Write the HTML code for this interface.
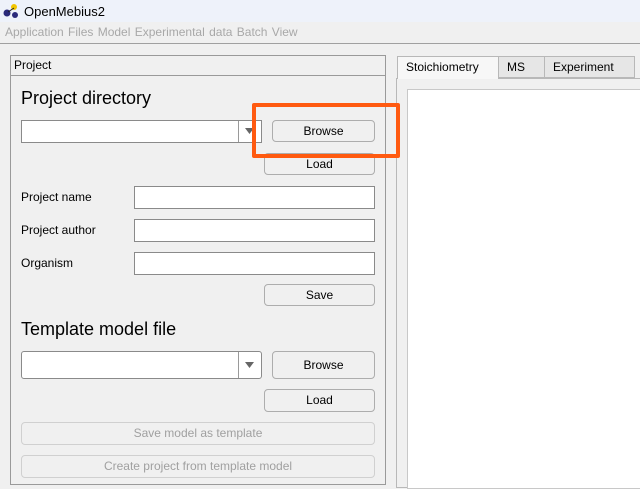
<!DOCTYPE html>
<html><head><style>
body{margin:0;width:640px;height:480px;overflow:hidden;background:#f0f0f0;font-family:"Liberation Sans",Arial,sans-serif;position:relative;font-size:12px;color:#000}
.a{position:absolute;box-sizing:border-box}
.btn{position:absolute;box-sizing:border-box;border:1px solid #adadad;border-radius:4px;background:#f0f0f0;text-align:center;font-size:12px;color:#000}
.dis{color:#a0a0a0;border-color:#d0d0d0}
.inp{position:absolute;box-sizing:border-box;border:1px solid #8a8a8a;background:#fff}
.lbl{position:absolute;font-size:12px}
</style></head><body>
<div class="a" style="left:0;top:0;width:640px;height:22px;background:#eef2fa"></div>
<svg class="a" style="left:3px;top:3px" width="16" height="16" viewBox="0 0 16 16"><circle cx="11" cy="4" r="3" fill="#f2c500"/><circle cx="4" cy="10" r="3.5" fill="#2a2a7a"/><circle cx="12" cy="12" r="3" fill="#2a2a7a"/><line x1="5" y1="9" x2="11" y2="5" stroke="#222"/></svg>
<div class="lbl" style="left:24px;top:4px;font-size:13px">OpenMebius2</div>
<div class="a" style="left:0;top:22px;width:640px;height:22px;background:#f0f0f0;border-bottom:1px solid #a0a0a0"></div>
<div class="lbl" style="left:5px;top:25px;color:#a8a8a8;font-size:12px;word-spacing:1px">Application Files Model Experimental data Batch View</div>

<div class="a" style="left:396px;top:78px;width:250px;height:410px;border:1px solid #b8b8b8;background:#f0f0f0"></div>
<div class="a" style="left:407px;top:89px;width:240px;height:400px;border:1px solid #c8c8c8;background:#fff"></div>
<div class="a" style="left:397px;top:56px;width:102px;height:23px;border:1px solid #b8b8b8;border-bottom:none;background:#f7f7f7"></div>
<div class="a" style="left:498px;top:56px;width:47px;height:22px;border:1px solid #b8b8b8;background:#e6e6e6"></div>
<div class="a" style="left:544px;top:56px;width:91px;height:22px;border:1px solid #b8b8b8;background:#e6e6e6"></div>
<div class="lbl" style="left:406px;top:60px">Stoichiometry</div>
<div class="lbl" style="left:507px;top:60px">MS</div>
<div class="lbl" style="left:553px;top:60px">Experiment</div>

<div class="a" style="left:10px;top:55px;width:376px;height:430px;border:1px solid #9a9a9a"></div>
<div class="a" style="left:11px;top:75px;width:374px;height:1px;background:#9a9a9a"></div>
<div class="lbl" style="left:14px;top:58px">Project</div>

<div class="lbl" style="left:21px;top:88px;font-size:18px">Project directory</div>
<div class="inp" style="left:21px;top:120px;width:241px;height:23px"></div>
<div class="a" style="left:238px;top:121px;width:1px;height:21px;background:#9a9a9a"></div>
<svg class="a" style="left:245px;top:128px" width="9" height="6"><path d="M0 0H9L4.5 6Z" fill="#666"/></svg>
<div class="btn" style="left:272px;top:120px;width:103px;height:22px;line-height:20px">Browse</div>
<div class="btn" style="left:264px;top:153px;width:111px;height:22px;line-height:20px">Load</div>

<div class="lbl" style="left:21px;top:190px">Project name</div>
<div class="inp" style="left:134px;top:186px;width:241px;height:23px"></div>
<div class="lbl" style="left:21px;top:223px">Project author</div>
<div class="inp" style="left:134px;top:219px;width:241px;height:23px"></div>
<div class="lbl" style="left:21px;top:256px">Organism</div>
<div class="inp" style="left:134px;top:252px;width:241px;height:23px"></div>
<div class="btn" style="left:264px;top:284px;width:111px;height:22px;line-height:20px">Save</div>

<div class="lbl" style="left:21px;top:319px;font-size:18px">Template model file</div>
<div class="inp" style="left:21px;top:351px;width:241px;height:28px;border-radius:3px"></div>
<div class="a" style="left:238px;top:352px;width:1px;height:26px;background:#9a9a9a"></div>
<svg class="a" style="left:245px;top:362px" width="9" height="6"><path d="M0 0H9L4.5 6Z" fill="#666"/></svg>
<div class="btn" style="left:272px;top:351px;width:103px;height:28px;line-height:26px">Browse</div>
<div class="btn" style="left:264px;top:389px;width:111px;height:23px;line-height:21px">Load</div>
<div class="btn dis" style="left:21px;top:422px;width:354px;height:23px;line-height:21px">Save model as template</div>
<div class="btn dis" style="left:21px;top:455px;width:354px;height:23px;line-height:21px">Create project from template model</div>

<div class="a" style="left:252px;top:103px;width:148px;height:55px;border:4px solid #ff5a10;border-radius:2px"></div>
</body></html>
